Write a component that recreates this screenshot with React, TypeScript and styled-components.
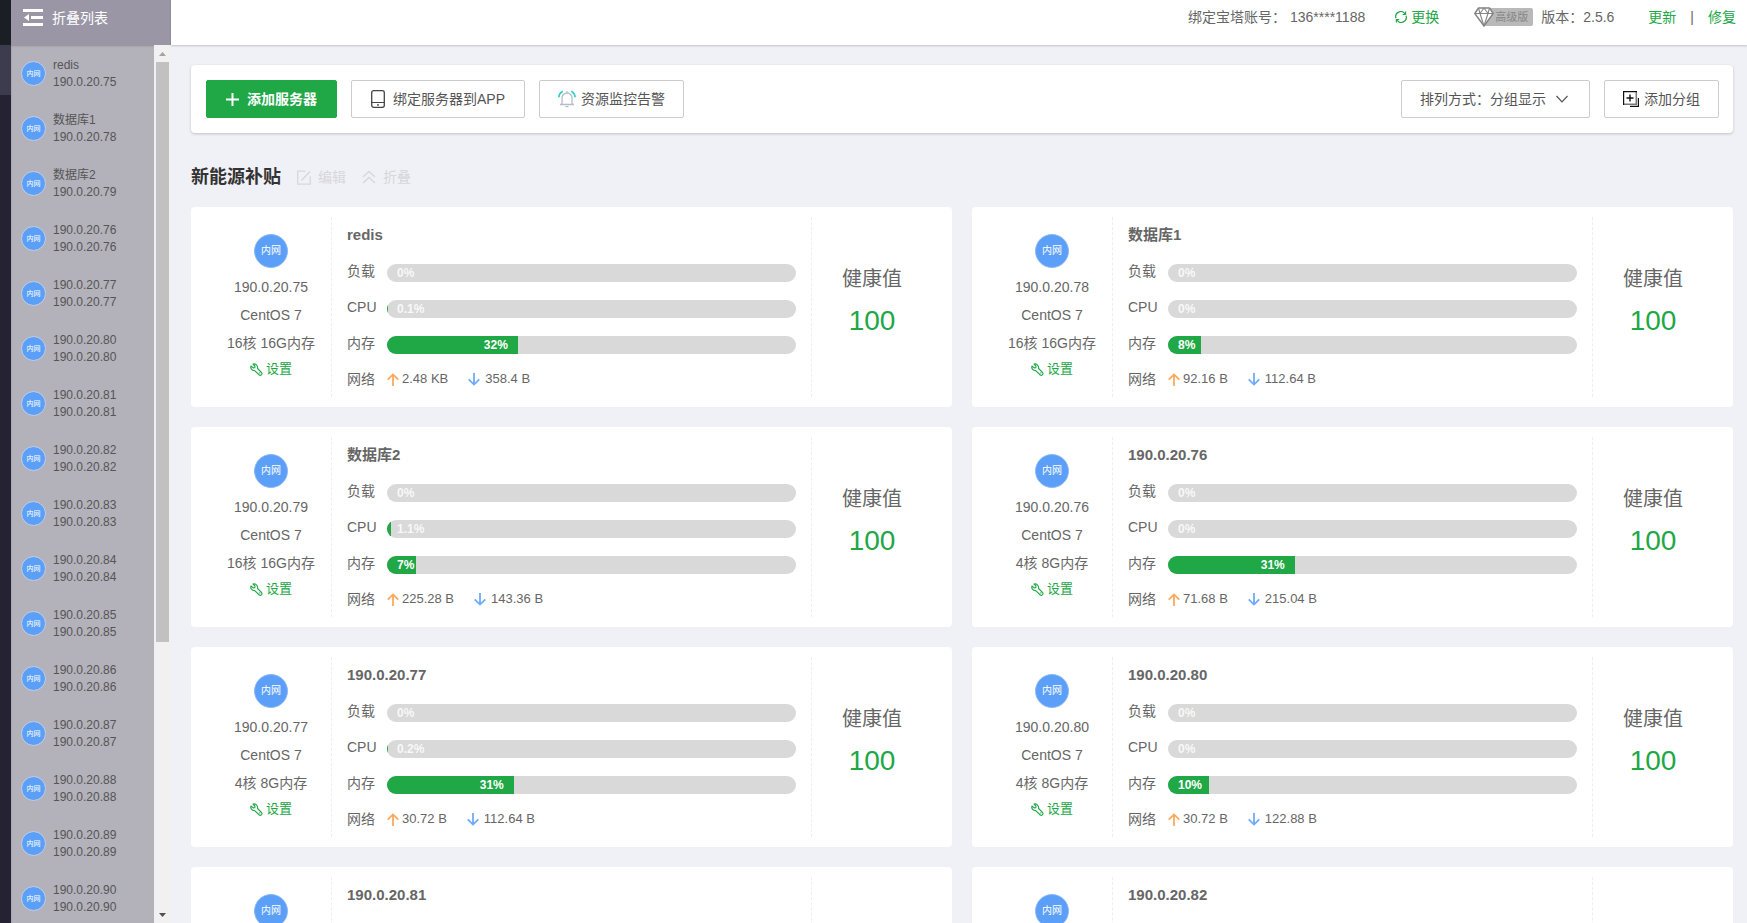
import React from "react";
import styled, { createGlobalStyle } from "styled-components";

const green = "#20a746";

const GlobalStyle = createGlobalStyle`
  *, *::before, *::after { box-sizing: border-box; }
  body {
    margin: 0;
    background: #f0f1f6;
    color: #666;
    font-family: "Liberation Sans", "Noto Sans CJK SC", sans-serif;
    font-size: 14px;
    line-height: 20px;
  }
  button, select { font: inherit; color: inherit; }
  a { color: inherit; text-decoration: none; }
  h2, h3, p, ul { margin: 0; padding: 0; }
  svg { display: block; flex: none; }
`;

const Shell = styled.div`
  display: flex;
  height: 100vh;
  overflow: hidden;
`;

/* ---------- left strip ---------- */
const Strip = styled.div`
  flex: none;
  width: 11px;
  display: flex;
  flex-direction: column;
  background: #252333;
`;
const StripTop = styled.div`
  height: 45px;
  background: #1b1e25;
`;
const StripActive = styled.div`
  height: 50px;
  background: #3d3c4e;
`;

/* ---------- server list ---------- */
const Sidebar = styled.aside`
  flex: none;
  width: 160px;
  display: flex;
  flex-direction: column;
  background: #b3b1ba;
`;
const CollapseButton = styled.button`
  flex: none;
  display: flex;
  align-items: center;
  gap: 9px;
  height: 45px;
  padding: 0 12px 10px;
  border: 0;
  background: #9a96a5;
  color: #fff;
  cursor: pointer;
`;
const SidebarBody = styled.div`
  flex: 1;
  min-height: 0;
  display: flex;
  box-shadow: inset 0 1px 2px rgba(0, 0, 0, 0.2);
`;
const ServerList = styled.ul`
  flex: 1;
  padding-top: 1px;
  overflow: hidden;
  list-style: none;
`;
const ServerLink = styled.a`
  display: flex;
  align-items: center;
  gap: 7px;
  height: 55px;
  padding-left: 10px;
  font-size: 12px;
  line-height: 17px;
  color: #555;
`;
const ServerText = styled.span`
  display: flex;
  flex-direction: column;
`;
const Scrollbar = styled.div`
  flex: none;
  width: 17px;
  display: flex;
  flex-direction: column;
  background: #f1f1f1;
`;
const ScrollArrow = styled.div`
  flex: none;
  height: 17px;
  display: flex;
  align-items: center;
  justify-content: center;
`;
const ScrollTrack = styled.div`
  flex: 1;
  display: grid;
  grid-template-rows: 11fr 5fr;
  padding: 0 2px;
`;
const ScrollThumb = styled.div`
  background: #c1c1c1;
`;

const NetBadge = styled.span<{ $small?: boolean }>`
  flex: none;
  display: flex;
  align-items: center;
  justify-content: center;
  width: ${(p) => (p.$small ? 25 : 34)}px;
  height: ${(p) => (p.$small ? 25 : 34)}px;
  border: 1px solid ${(p) => (p.$small ? "#c4cfe4" : "#8db9f5")};
  border-radius: 50%;
  background: #5c9ff8;
  color: #fff;
  font-size: ${(p) => (p.$small ? 7 : 10)}px;
  line-height: 1;
`;

/* ---------- main area ---------- */
const Main = styled.main`
  flex: 1;
  min-width: 0;
  display: flex;
  flex-direction: column;
`;
const TopBar = styled.header`
  flex: none;
  display: flex;
  align-items: center;
  justify-content: flex-end;
  height: 45px;
  padding: 0 11px 11px 20px;
  background: #fff;
  box-shadow: 0 1px 2px rgba(0, 0, 0, 0.2);
  white-space: nowrap;
`;
const Account = styled.span`
  display: flex;
  gap: 4px;
  margin-right: 30px;
`;
const GreenLink = styled.a`
  display: flex;
  align-items: center;
  gap: 4px;
  color: ${green};
`;
const Edition = styled.span`
  display: flex;
  align-items: center;
  margin: 0 8px 0 35px;
`;
const EditionLabel = styled.span`
  height: 18px;
  margin-left: -10px;
  padding: 0 5px 0 11px;
  border-radius: 2px;
  background: #b9b9b9;
  color: #858585;
  font-size: 11px;
  line-height: 19px;
`;
const Version = styled.span`
  margin-right: 34px;
`;
const Divider = styled.span`
  margin: 0 14px;
`;
const Gem = styled.svg`
  position: relative;
`;

const Content = styled.div`
  flex: 1;
  min-height: 0;
  overflow-y: auto;
  scrollbar-width: none;
  padding: 20px 14px 20px 20px;
`;
const Toolbar = styled.div`
  display: flex;
  flex-wrap: wrap;
  gap: 14px;
  padding: 15px 14px 15px 15px;
  border-radius: 4px;
  background: #fff;
  box-shadow: 0 1px 3px rgba(0, 0, 0, 0.2);
`;
const Spacer = styled.div`
  flex: 1;
`;
const ToolButton = styled.button<{ $primary?: boolean; $tight?: boolean }>`
  display: flex;
  align-items: center;
  gap: ${(p) => (p.$tight ? 5 : 8)}px;
  height: 38px;
  padding: 0 ${(p) => (p.$tight ? 18 : 19)}px;
  border: 1px solid ${(p) => (p.$primary ? green : "#ccc")};
  border-radius: 2px;
  background: ${(p) => (p.$primary ? green : "#fff")};
  color: ${(p) => (p.$primary ? "#fff" : "#555")};
  font-weight: ${(p) => (p.$primary ? 700 : 400)};
  white-space: nowrap;
  cursor: pointer;
`;
const SortField = styled.label`
  display: flex;
  align-items: center;
  height: 38px;
  padding: 0 21px 0 18px;
  border: 1px solid #ccc;
  border-radius: 2px;
  color: #555;
`;
const SortSelect = styled.select`
  appearance: none;
  margin-right: 10px;
  padding: 0;
  border: 0;
  background: transparent;
`;

const GroupHead = styled.div`
  display: flex;
  align-items: center;
  gap: 16px;
  padding: 30px 0 16px;
`;
const GroupTitle = styled.h2`
  color: #333;
  font-size: 18px;
  line-height: 28px;
`;
const GroupAction = styled.button`
  display: flex;
  align-items: center;
  gap: 7px;
  padding: 0;
  border: 0;
  background: none;
  color: #d6d7da;
  cursor: pointer;
`;

const CardGrid = styled.div`
  display: grid;
  grid-template-columns: repeat(2, minmax(0, 1fr));
  gap: 20px;
`;
const Card = styled.article`
  display: flex;
  padding: 10px 20px;
  border-radius: 4px;
  background: #fff;
`;
const HostColumn = styled.div`
  flex: none;
  width: 121px;
  display: flex;
  flex-direction: column;
  align-items: center;
  padding: 17px 0 16px;
  border-right: 1px dashed #eee;
  white-space: nowrap;
`;
const HostLines = styled.div`
  margin-top: 5px;
  text-align: center;
  line-height: 28px;
`;
const SettingsLink = styled(GreenLink)`
  gap: 3px;
  font-size: 13px;
  line-height: 24px;
`;
const StatsColumn = styled.div`
  flex: 1;
  min-width: 0;
  padding: 7px 15px 0;
`;
const ServerName = styled.h3`
  margin-bottom: 9px;
  font-size: 15px;
  line-height: 22px;
`;
const StatRow = styled.div<{ $last?: boolean }>`
  display: flex;
  height: ${(p) => (p.$last ? 32 : 36)}px;
`;
const StatLabel = styled.span`
  flex: none;
  width: 40px;
  line-height: 32px;
`;
const Track = styled.div`
  flex: 1;
  align-self: center;
  height: 18px;
  border-radius: 9px;
  overflow: hidden;
  background: #d9d9d9;
`;
const Fill = styled.div`
  height: 18px;
  background: ${green};
`;
const FillText = styled.span<{ $faint: boolean }>`
  display: block;
  padding: 0 10px;
  color: ${(p) => (p.$faint ? "#f8f8f8" : "#fff")};
  font-size: 12px;
  font-weight: 700;
  line-height: 19px;
  text-align: right;
  white-space: nowrap;
`;
const Traffic = styled.div`
  display: flex;
  align-items: center;
  gap: 20px;
  font-size: 13px;
`;
const Rate = styled.span<{ $down?: boolean }>`
  display: flex;
  align-items: center;
  gap: ${(p) => (p.$down ? 5 : 3)}px;
`;
const HealthColumn = styled.div`
  flex: none;
  width: 121px;
  padding-top: 48px;
  border-left: 1px dashed #eee;
  text-align: center;
`;
const HealthLabel = styled.p`
  font-size: 20px;
  line-height: 28px;
`;
const HealthScore = styled.p`
  margin-top: 8px;
  color: ${green};
  font-size: 28px;
  line-height: 40px;
`;

/* ---------- icons ---------- */
const CollapseIcon = () => (
  <svg width="20" height="17" viewBox="0 0 20 17" fill="#fff">
    <path d="M0 0h20v3H0zM8 7h12v3H8zM0 14h20v3H0zM6 5v7L1 8.500z" />
  </svg>
);
const PlusIcon = () => (
  <svg width="13" height="13" viewBox="0 0 13 13" stroke="#fff" strokeWidth="2">
    <path d="M6.500 0v13M0 6.500h13" />
  </svg>
);
const PhoneIcon = () => (
  <svg width="14" height="18" viewBox="0 0 14 18" fill="none" stroke="#444">
    <rect x=".7" y=".7" width="12.600" height="16.600" rx="2" strokeWidth="1.300" />
    <path d="M1 12.500h12" />
    <circle cx="7" cy="14.900" r=".9" fill="#444" stroke="none" />
  </svg>
);
const BellIcon = () => (
  <svg width="18" height="18" viewBox="0 0 18 18" fill="none" strokeWidth="1.300">
    <path stroke="#b4bdc8" d="M2 14.500h14M4 14.300V8a5 5 0 0 1 10 0v6.300M9 1.200V3M7.500 16.600h3" />
    <path stroke="#34cfc9" strokeWidth="1.800" d="M.9 7.200C1 4.500 2.300 2.500 4.800 1.200M17.100 7.200C17 4.500 15.700 2.500 13.200 1.200" />
  </svg>
);
const ChevronIcon = () => (
  <svg width="12" height="8" viewBox="0 0 12 8" fill="none" stroke="#555" strokeWidth="1.200">
    <path d="M.5 1L6 6.800 11.500 1" />
  </svg>
);
const AddGroupIcon = () => (
  <svg width="16" height="16" viewBox="0 0 16 16" fill="none" stroke="#111">
    <path d="M13.300 1v12.300H1" stroke="#777" strokeWidth="1.500" />
    <path d="M14 .6H.6V14" strokeWidth="1.200" />
    <path d="M7 3.500v7M3.500 7h7" strokeWidth="1.400" />
    <path d="M15.400 7v8.400H7" strokeWidth="1.200" />
  </svg>
);
const EditIcon = () => (
  <svg width="14" height="15" viewBox="0 0 14 15" fill="none" stroke="currentColor" strokeWidth="1.300">
    <path d="M8.500 1.200H.7v13h12.600V6.500M4.500 10.500L13 1.500" />
  </svg>
);
const FoldIcon = () => (
  <svg width="14" height="14" viewBox="0 0 14 14" fill="none" stroke="currentColor" strokeWidth="1.400">
    <path d="M1 7l6-5.500L13 7M1 13l6-5.500L13 13" />
  </svg>
);
const RefreshIcon = () => (
  <svg width="12" height="12" viewBox="0 0 12 12" fill="none" stroke="currentColor" strokeWidth="1.200">
    <path d="M1 7.200A5 5 0 0 1 10 3M11 4.800A5 5 0 0 1 2 9M10.600.5v3H7.800M1.400 11.500v-3h2.800" />
  </svg>
);
const GemIcon = () => (
  <Gem width="20" height="20" viewBox="0 0 20 20" fill="#fff" stroke="#858585" strokeWidth="1.400" strokeLinejoin="round">
    <path d="M4.500 1h11l3.700 5.500L10 19 .8 6.500z" />
    <path fill="none" d="M.8 6.500h18.400M4.500 1L6 6.500 10 19l4-12.500L15.500 1M6 6.500L10 1l4 5.500" strokeWidth="1.100" />
  </Gem>
);
const WrenchIcon = () => (
  <svg width="13" height="13" viewBox="0 0 13 13" fill="none" stroke="currentColor" strokeWidth="1.100" strokeLinejoin="round">
    <path d="M3 1L5 3 4.800 4.600 3.200 4.900 1 3C.2 5.200 1.700 7.700 4.700 7.600L9.300 12C10.700 13 12.700 11.200 11.700 9.700L7.600 5.500C8 2.500 5.500.2 3 1z" />
    <path d="M9.500 9.500l.8.8" />
  </svg>
);
const UpIcon = () => (
  <svg width="12" height="13" viewBox="0 0 12 13" fill="none" stroke="#fca95c" strokeWidth="1.800">
    <path d="M6 13V1.500M.7 6.700L6 1.400l5.300 5.300" />
  </svg>
);
const DownIcon = () => (
  <svg width="12" height="13" viewBox="0 0 12 13" fill="none" stroke="#6fabfa" strokeWidth="1.800">
    <path d="M6 0v11.500M.7 6.300L6 11.600l5.300-5.300" />
  </svg>
);
const Caret = ({ down }: { down?: boolean }) => (
  <svg width="7" height="4" viewBox="0 0 7 4" fill={down ? "#505050" : "#a3a3a3"}>
    <path d={down ? "M0 0h7L3.500 4z" : "M0 4h7L3.500 0z"} />
  </svg>
);

/* ---------- data ---------- */
interface Server {
  name: string;
  ip: string;
  spec: string;
  load: number;
  cpu: number;
  memory: number;
  up: string;
  down: string;
}

const servers: Server[] = [
  { name: "redis", ip: "190.0.20.75", spec: "16核 16G内存", load: 0, cpu: 0.1, memory: 32, up: "2.48 KB", down: "358.4 B" },
  { name: "数据库1", ip: "190.0.20.78", spec: "16核 16G内存", load: 0, cpu: 0, memory: 8, up: "92.16 B", down: "112.64 B" },
  { name: "数据库2", ip: "190.0.20.79", spec: "16核 16G内存", load: 0, cpu: 1.1, memory: 7, up: "225.28 B", down: "143.36 B" },
  { name: "190.0.20.76", ip: "190.0.20.76", spec: "4核 8G内存", load: 0, cpu: 0, memory: 31, up: "71.68 B", down: "215.04 B" },
  { name: "190.0.20.77", ip: "190.0.20.77", spec: "4核 8G内存", load: 0, cpu: 0.2, memory: 31, up: "30.72 B", down: "112.64 B" },
  { name: "190.0.20.80", ip: "190.0.20.80", spec: "4核 8G内存", load: 0, cpu: 0, memory: 10, up: "30.72 B", down: "122.88 B" },
  { name: "190.0.20.81", ip: "190.0.20.81", spec: "4核 8G内存", load: 0, cpu: 0, memory: 10, up: "30.72 B", down: "112.64 B" },
  { name: "190.0.20.82", ip: "190.0.20.82", spec: "4核 8G内存", load: 0, cpu: 0, memory: 10, up: "30.72 B", down: "112.64 B" },
];

const listed = [
  ...servers.map(({ name, ip }) => ({ name, ip })),
  ...[83, 84, 85, 86, 87, 88, 89, 90].map((n) => ({ name: `190.0.20.${n}`, ip: `190.0.20.${n}` })),
];

function Stat({ label, value }: { label: string; value: number }) {
  return (
    <StatRow>
      <StatLabel>{label}</StatLabel>
      <Track>
        <Fill style={{ width: `${value}%` }}>
          <FillText $faint={value < 5}>{value}%</FillText>
        </Fill>
      </Track>
    </StatRow>
  );
}

function ServerCard({ server }: { server: Server }) {
  return (
    <Card>
      <HostColumn>
        <NetBadge>内网</NetBadge>
        <HostLines>
          <p>{server.ip}</p>
          <p>CentOS 7</p>
          <p>{server.spec}</p>
        </HostLines>
        <SettingsLink href="#settings">
          <WrenchIcon />
          设置
        </SettingsLink>
      </HostColumn>
      <StatsColumn>
        <ServerName>{server.name}</ServerName>
        <Stat label="负载" value={server.load} />
        <Stat label="CPU" value={server.cpu} />
        <Stat label="内存" value={server.memory} />
        <StatRow $last>
          <StatLabel>网络</StatLabel>
          <Traffic>
            <Rate>
              <UpIcon />
              {server.up}
            </Rate>
            <Rate $down>
              <DownIcon />
              {server.down}
            </Rate>
          </Traffic>
        </StatRow>
      </StatsColumn>
      <HealthColumn>
        <HealthLabel>健康值</HealthLabel>
        <HealthScore>100</HealthScore>
      </HealthColumn>
    </Card>
  );
}

export default function App() {
  return (
    <Shell>
      <GlobalStyle />
      <Strip>
        <StripTop />
        <StripActive />
      </Strip>
      <Sidebar>
        <CollapseButton type="button">
          <CollapseIcon />
          折叠列表
        </CollapseButton>
        <SidebarBody>
          <ServerList>
            {listed.map((s) => (
              <li key={s.ip}>
                <ServerLink href={`#${s.ip}`}>
                  <NetBadge $small>内网</NetBadge>
                  <ServerText>
                    <span>{s.name}</span>
                    <span>{s.ip}</span>
                  </ServerText>
                </ServerLink>
              </li>
            ))}
          </ServerList>
          <Scrollbar aria-hidden="true">
            <ScrollArrow>
              <Caret />
            </ScrollArrow>
            <ScrollTrack>
              <ScrollThumb />
            </ScrollTrack>
            <ScrollArrow>
              <Caret down />
            </ScrollArrow>
          </Scrollbar>
        </SidebarBody>
      </Sidebar>
      <Main>
        <TopBar>
          <Account>
            <span>绑定宝塔账号：</span>
            <span>136****1188</span>
          </Account>
          <GreenLink href="#switch">
            <RefreshIcon />
            更换
          </GreenLink>
          <Edition>
            <GemIcon />
            <EditionLabel>高级版</EditionLabel>
          </Edition>
          <Version>版本：2.5.6</Version>
          <GreenLink href="#update">更新</GreenLink>
          <Divider>|</Divider>
          <GreenLink href="#repair">修复</GreenLink>
        </TopBar>
        <Content>
          <Toolbar>
            <ToolButton type="button" $primary>
              <PlusIcon />
              添加服务器
            </ToolButton>
            <ToolButton type="button">
              <PhoneIcon />
              绑定服务器到APP
            </ToolButton>
            <ToolButton type="button" $tight>
              <BellIcon />
              资源监控告警
            </ToolButton>
            <Spacer />
            <SortField>
              排列方式：
              <SortSelect defaultValue="group">
                <option value="group">分组显示</option>
              </SortSelect>
              <ChevronIcon />
            </SortField>
            <ToolButton type="button" $tight>
              <AddGroupIcon />
              添加分组
            </ToolButton>
          </Toolbar>
          <GroupHead>
            <GroupTitle>新能源补贴</GroupTitle>
            <GroupAction type="button">
              <EditIcon />
              编辑
            </GroupAction>
            <GroupAction type="button">
              <FoldIcon />
              折叠
            </GroupAction>
          </GroupHead>
          <CardGrid>
            {servers.map((s) => (
              <ServerCard key={s.ip} server={s} />
            ))}
          </CardGrid>
        </Content>
      </Main>
    </Shell>
  );
}
